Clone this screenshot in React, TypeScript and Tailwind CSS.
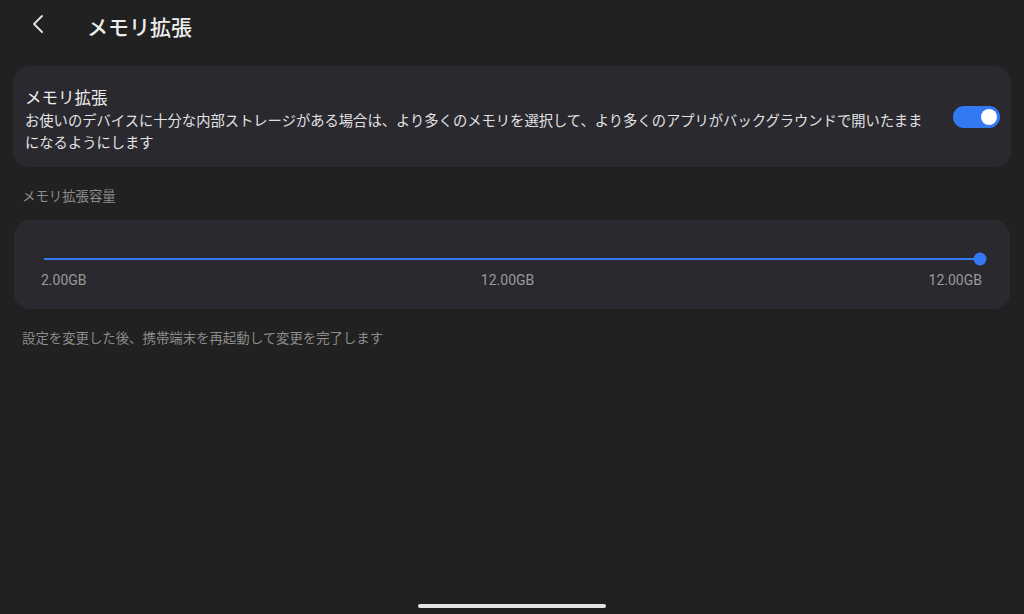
import React from 'react';

const jp = { fontFamily: '"Noto Sans CJK JP", "Noto Sans", sans-serif' };
const num = { fontFamily: 'Roboto, "Noto Sans", sans-serif' };

function Toggle({ on }: { on: boolean }) {
  return (
    <div
      className={`flex h-[22px] w-[47px] shrink-0 items-center rounded-full px-[3px] ${
        on ? 'justify-end bg-[#3479f4]' : 'justify-start bg-[#555]'
      }`}
    >
      <div className="h-[16px] w-[16px] rounded-full bg-white" />
    </div>
  );
}

export default function App() {
  const min = 2;
  const max = 12;
  const value = 12;
  const pct = ((value - min) / (max - min)) * 100;

  return (
    <div className="relative h-[614px] w-full overflow-hidden bg-[#212121] text-[#ececec]" style={jp}>
      {/* ヘッダー */}
      <div className="flex h-[52px] items-center">
        <button className="ml-[31px] mb-[4px] flex h-[22px] w-[14px] items-center justify-center">
          <svg width="12" height="20" viewBox="0 0 12 20" fill="none">
            <path d="M10 2 L2 10 L10 18" stroke="#e6e6e6" strokeWidth="1.8" strokeLinecap="round" strokeLinejoin="round" />
          </svg>
        </button>
        <h1 className="ml-[42px] text-[21px] font-medium leading-[28px] text-[#ececec]">メモリ拡張</h1>
      </div>

      {/* メモリ拡張 スイッチ */}
      <div className="mx-[13px] mt-[14px] flex items-center rounded-[16px] bg-[#29292f] pb-[14px] pl-[12px] pr-[11px] pt-[19px]">
        <div className="flex-1 pr-[20px]">
          <div className="text-[16.5px] leading-[24px] text-[#ececec]">メモリ拡張</div>
          <div className="text-[14.3px] leading-[22px] text-[#e2e2e2]">
            お使いのデバイスに十分な内部ストレージがある場合は、より多くのメモリを選択して、より多くのアプリがバックグラウンドで開いたままになるようにします
          </div>
        </div>
        <div className="mb-[5px]">
          <Toggle on={true} />
        </div>
      </div>

      <div className="ml-[22px] mt-[18px] text-[13.4px] leading-[20px] text-[#8c8c8c]">メモリ拡張容量</div>

      {/* スライダー */}
      <div className="mx-[14px] mt-[15px] rounded-[16px] bg-[#29292f] px-[28px] pb-[20px] pt-[38px]">
        <div className="relative mx-[2px] h-[2px] bg-[#4a4a52]">
          <div className="absolute left-0 top-0 h-[2px] bg-[#3479f4]" style={{ width: pct + '%' }} />
          <div
            className="absolute top-1/2 h-[13px] w-[13px] -translate-x-1/2 -translate-y-1/2 rounded-full bg-[#3479f4]"
            style={{ left: pct + '%' }}
          />
        </div>
        <div className="mt-[12px] flex justify-between text-[14px] leading-[17px] text-[#999]" style={num}>
          <span className="-ml-[1px]">2.00GB</span>
          <span>12.00GB</span>
          <span>12.00GB</span>
        </div>
      </div>

      <div className="ml-[22px] mt-[18px] text-[13.4px] leading-[20px] text-[#8c8c8c]">
        設定を変更した後、携帯端末を再起動して変更を完了します
      </div>

      {/* ホームインジケーター */}
      <div className="absolute bottom-[6px] left-[418px] h-[4px] w-[188px] rounded-full bg-[#e4e4e4]" />
    </div>
  );
}
